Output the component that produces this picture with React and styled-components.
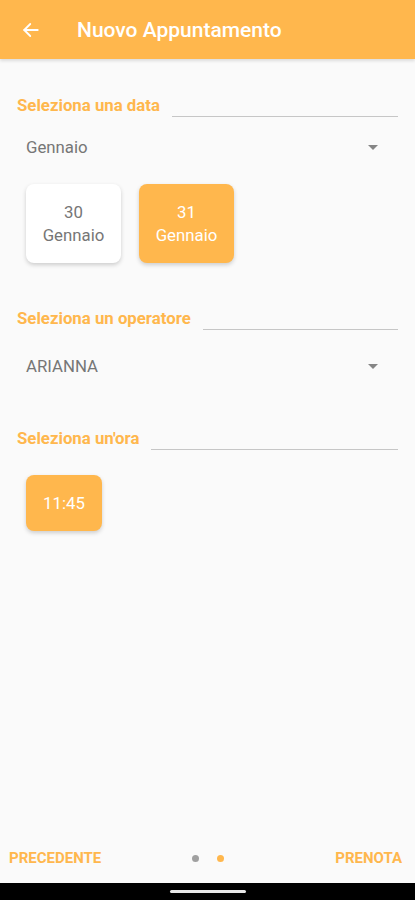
import styled, { createGlobalStyle } from "styled-components";

const Global = createGlobalStyle`
  html, body {
    margin: 0;
    padding: 0;
    background: #fafafa;
    font-family: Roboto, "Noto Sans", "Liberation Sans", sans-serif;
  }
`;

const Screen = styled.div`
  width: 415px;
  height: 900px;
  display: flex;
  flex-direction: column;
  background: #fafafa;
  overflow: hidden;
`;

const Header = styled.header`
  height: 59px;
  flex-shrink: 0;
  background: #ffb74d;
  display: flex;
  align-items: center;
  padding-left: 20px;
  box-shadow: 0 2px 3px rgba(0, 0, 0, 0.12);
  position: relative;
  z-index: 1;
`;

const BackBtn = styled.button`
  width: 22px;
  height: 22px;
  padding: 0;
  border: none;
  background: none;
  display: flex;
  align-items: center;
  justify-content: center;
  margin-right: 35px;
`;

const HeaderTitle = styled.h1`
  margin: 0;
  color: #ffffff;
  font-size: 21px;
  font-weight: 500;
`;

const Content = styled.main`
  flex: 1;
  padding: 0 17px;
  display: flex;
  flex-direction: column;
`;

const SectionHead = styled.div`
  display: flex;
  align-items: flex-end;
  margin-top: ${(p) => p.$top}px;
`;

const SectionLabel = styled.span`
  color: #ffb74d;
  font-size: 16.8px;
  font-weight: 700;
  white-space: nowrap;
  line-height: 20px;
`;

const SectionLine = styled.div`
  flex: 1;
  height: 1.5px;
  background: #c6c6c6;
  margin-left: 12px;
  margin-bottom: -2px;
`;

const Select = styled.div`
  display: flex;
  align-items: center;
  justify-content: space-between;
  padding: 0 20px 0 9px;
  margin-top: ${(p) => p.$top}px;
  height: 24px;
  color: #767676;
  font-size: 16.8px;
`;

const Caret = styled.span`
  width: 0;
  height: 0;
  border-left: 5px solid transparent;
  border-right: 5px solid transparent;
  border-top: 5px solid #858585;
`;

const ChipRow = styled.div`
  display: flex;
  gap: 18px;
  padding-left: 9px;
  margin-top: ${(p) => p.$top}px;
`;

const Chip = styled.div`
  width: ${(p) => p.$w}px;
  height: ${(p) => p.$h}px;
  border-radius: 8px;
  background: ${(p) => (p.$active ? "#ffb74d" : "#ffffff")};
  color: ${(p) => (p.$active ? "#ffffff" : "#767676")};
  box-shadow: 0 2px 4px rgba(0, 0, 0, 0.18);
  display: flex;
  flex-direction: column;
  align-items: center;
  justify-content: center;
  font-size: 16.8px;
  line-height: 23px;
  text-align: center;
`;

const Footer = styled.footer`
  height: 50px;
  display: grid;
  grid-template-columns: 1fr auto 1fr;
  align-items: center;
  padding: 0 13px 0 9px;
  flex-shrink: 0;
`;

const FooterBtn = styled.button`
  border: none;
  background: none;
  padding: 0;
  color: #ffb74d;
  font-family: inherit;
  font-size: 15px;
  font-weight: 700;
  justify-self: ${(p) => (p.$end ? "end" : "start")};
`;

const Dots = styled.div`
  display: flex;
  gap: 18px;
  margin-left: 4px;
`;

const Dot = styled.span`
  width: 7px;
  height: 7px;
  border-radius: 50%;
  background: ${(p) => (p.$active ? "#ffb74d" : "#a0a0a0")};
`;

const NavBar = styled.div`
  height: 17px;
  background: #000;
  display: flex;
  align-items: center;
  justify-content: center;
  flex-shrink: 0;
`;

const Handle = styled.span`
  width: 76px;
  height: 3px;
  border-radius: 2px;
  background: #e8e8e8;
`;

export default function App() {
  return (
    <>
      <Global />
      <Screen>
        <Header>
          <BackBtn aria-label="Indietro">
            <svg width="18" height="18" viewBox="0 0 24 24" fill="none" stroke="#fff" strokeWidth="2.4" strokeLinecap="round" strokeLinejoin="round">
              <path d="M21 12H3" />
              <path d="M11 4l-8 8 8 8" />
            </svg>
          </BackBtn>
          <HeaderTitle>Nuovo Appuntamento</HeaderTitle>
        </Header>
        <Content>
          <SectionHead $top={36}>
            <SectionLabel>Seleziona una data</SectionLabel>
            <SectionLine />
          </SectionHead>
          <Select $top={20}>
            <span>Gennaio</span>
            <Caret />
          </Select>
          <ChipRow $top={25}>
            <Chip $w={95} $h={79}>
              <span>30</span>
              <span>Gennaio</span>
            </Chip>
            <Chip $w={95} $h={79} $active>
              <span>31</span>
              <span>Gennaio</span>
            </Chip>
          </ChipRow>
          <SectionHead $top={45}>
            <SectionLabel>Seleziona un operatore</SectionLabel>
            <SectionLine />
          </SectionHead>
          <Select $top={26}>
            <span>ARIANNA</span>
            <Caret />
          </Select>
          <SectionHead $top={50}>
            <SectionLabel>Seleziona un'ora</SectionLabel>
            <SectionLine />
          </SectionHead>
          <ChipRow $top={27}>
            <Chip $w={76} $h={56} $active>
              <span>11:45</span>
            </Chip>
          </ChipRow>
        </Content>
        <Footer>
          <FooterBtn>PRECEDENTE</FooterBtn>
          <Dots>
            <Dot />
            <Dot $active />
          </Dots>
          <FooterBtn $end>PRENOTA</FooterBtn>
        </Footer>
        <NavBar>
          <Handle />
        </NavBar>
      </Screen>
    </>
  );
}
